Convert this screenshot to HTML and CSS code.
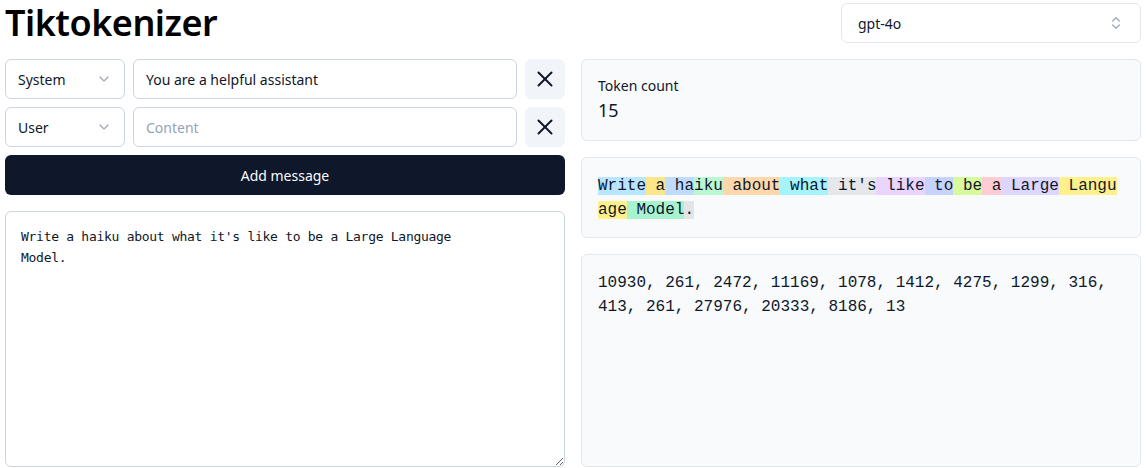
FILE: index.html
```html
<!DOCTYPE html>
<html lang="en">
<head>
<meta charset="utf-8">
<title>Tiktokenizer</title>
<link rel="stylesheet" href="styles.css">
</head>
<body>
<main class="page">
  <header class="top">
    <h1 class="title">Tiktokenizer</h1>
    <div class="model-select">
      <span>gpt-4o</span>
      <svg class="icon-updown" width="16" height="16" viewBox="0 0 24 24" fill="none" stroke="currentColor" stroke-width="2" stroke-linecap="round" stroke-linejoin="round"><path d="m7 15 5 5 5-5"/><path d="m7 9 5-5 5 5"/></svg>
    </div>
  </header>

  <div class="columns">
    <section class="left">
      <div class="msg-row">
        <div class="role-select">
          <span>System</span>
          <svg class="icon-down" width="16" height="16" viewBox="0 0 24 24" fill="none" stroke="currentColor" stroke-width="2" stroke-linecap="round" stroke-linejoin="round"><path d="m6 9 6 6 6-6"/></svg>
        </div>
        <input class="content-input" type="text" value="You are a helpful assistant" placeholder="Content">
        <button class="remove-btn" type="button" aria-label="Remove">
          <svg width="16" height="16" viewBox="0 0 16 16" fill="none" stroke="currentColor" stroke-width="2" stroke-linecap="round"><path d="M1.5 1.5 14.5 14.5"/><path d="M14.5 1.5 1.5 14.5"/></svg>
        </button>
      </div>
      <div class="msg-row">
        <div class="role-select">
          <span>User</span>
          <svg class="icon-down" width="16" height="16" viewBox="0 0 24 24" fill="none" stroke="currentColor" stroke-width="2" stroke-linecap="round" stroke-linejoin="round"><path d="m6 9 6 6 6-6"/></svg>
        </div>
        <input class="content-input" type="text" value="" placeholder="Content">
        <button class="remove-btn" type="button" aria-label="Remove">
          <svg width="16" height="16" viewBox="0 0 16 16" fill="none" stroke="currentColor" stroke-width="2" stroke-linecap="round"><path d="M1.5 1.5 14.5 14.5"/><path d="M14.5 1.5 1.5 14.5"/></svg>
        </button>
      </div>
      <button class="add-btn" type="button">Add message</button>
      <textarea class="prompt">Write a haiku about what it's like to be a Large Language Model.</textarea>
    </section>

    <section class="right">
      <div class="card count-card">
        <div class="count-label">Token count</div>
        <div class="count-value">15</div>
      </div>
      <div class="card mono tokens"><span class="t-sky">Write</span><span class="t-amber"> a</span><span class="t-blue"> ha</span><span class="t-green">iku</span><span class="t-orange"> about</span><span class="t-cyan"> what</span><span class="t-gray"> it's</span><span class="t-purple"> like</span><span class="t-indigo"> to</span><span class="t-lime"> be</span><span class="t-rose"> a</span><span class="t-violet"> Large</span><span class="t-yellow"> Language</span><span class="t-emerald"> Model</span><span class="t-zinc">.</span></div>
      <div class="card mono ids">10930, 261, 2472, 11169, 1078, 1412, 4275, 1299, 316, 413, 261, 27976, 20333, 8186, 13</div>
    </section>
  </div>
</main>
</body>
</html>
```
FILE: styles.css
```css
* { box-sizing: border-box; }

html, body {
  margin: 0;
  background: #ffffff;
}

body {
  font-family: "Noto Sans", "DejaVu Sans", sans-serif;
  color: #0f172a;
  font-size: 14px;
}

.page {
  padding: 3px 5px 0;
}

.top {
  display: flex;
  align-items: center;
  justify-content: space-between;
  height: 40px;
  margin-bottom: 16px;
}

.title {
  margin: 0;
  font-size: 36px;
  line-height: 40px;
  font-weight: 600;
  color: #000;
  letter-spacing: -0.5px;
}

.model-select {
  width: 300px;
  height: 40px;
  border: 1px solid #e2e8f0;
  border-radius: 6px;
  display: flex;
  align-items: center;
  justify-content: space-between;
  padding: 0 16px;
  font-size: 14px;
  background: #fff;
}

.icon-updown, .icon-down {
  color: #64748b;
  opacity: 0.6;
  flex: none;
}

.columns {
  display: grid;
  grid-template-columns: 1fr 1fr;
  gap: 16px;
}

.left {
  display: flex;
  flex-direction: column;
  gap: 8px;
}

.msg-row {
  display: flex;
  gap: 8px;
  height: 40px;
}

.role-select {
  width: 120px;
  flex: none;
  border: 1px solid #cbd5e1;
  border-radius: 6px;
  display: flex;
  align-items: center;
  justify-content: space-between;
  padding: 0 12px;
  font-size: 14px;
}

.content-input {
  flex: 1;
  min-width: 0;
  height: 40px;
  border: 1px solid #cbd5e1;
  border-radius: 6px;
  padding: 0 12px;
  font-family: inherit;
  font-size: 14px;
  color: #0f172a;
  outline: none;
}

.content-input::placeholder {
  color: #94a3b8;
}

.remove-btn {
  width: 40px;
  height: 40px;
  flex: none;
  border: none;
  border-radius: 6px;
  background: #f1f5f9;
  color: #0f172a;
  display: flex;
  align-items: center;
  justify-content: center;
  padding: 0;
}

.add-btn {
  height: 40px;
  border: none;
  border-radius: 6px;
  background: #0f172a;
  color: #f8fafc;
  font-family: inherit;
  font-size: 14px;
  font-weight: 400;
}

.prompt {
  margin-top: 8px;
  height: 256px;
  border: 1px solid #cbd5e1;
  border-radius: 6px;
  padding: 14px 88px 12px 15px;
  font-family: "DejaVu Sans Mono", monospace;
  font-size: 13px;
  letter-spacing: -0.28px;
  line-height: 21px;
  color: #0f172a;
  resize: vertical;
  outline: none;
}

.right {
  display: flex;
  flex-direction: column;
  gap: 16px;
}

.card {
  background: #f8fafc;
  border: 1px solid #e2e8f0;
  border-radius: 6px;
  padding: 16px;
}

.count-label {
  font-size: 14px;
  line-height: 20px;
}

.count-value {
  font-size: 18px;
  line-height: 28px;
}

.mono {
  font-family: "Liberation Mono", "Courier New", monospace;
  font-size: 16px;
  line-height: 24px;
  color: #0f172a;
}

.tokens {
  white-space: pre-wrap;
  word-break: break-all;
  padding-bottom: 15px;
}

.ids {
  flex: 1;
  min-height: 212px;
}

.t-sky { background: #bae6fd; }
.t-amber { background: #fde68a; }
.t-blue { background: #bfdbfe; }
.t-green { background: #bbf7d0; }
.t-orange { background: #fed7aa; }
.t-cyan { background: #a5f3fc; }
.t-gray { background: #e5e7eb; }
.t-purple { background: #e9d5ff; }
.t-indigo { background: #c7d2fe; }
.t-lime { background: #d9f99d; }
.t-rose { background: #fecdd3; }
.t-violet { background: #ddd6fe; }
.t-yellow { background: #fef08a; }
.t-emerald { background: #a7f3d0; }
.t-zinc { background: #e4e4e7; }
```
